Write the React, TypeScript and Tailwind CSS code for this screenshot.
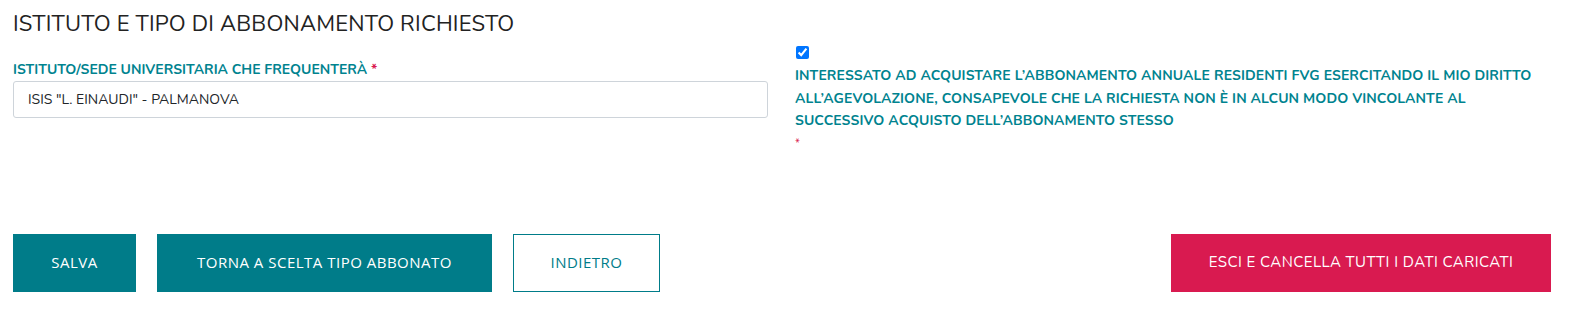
import { useState } from 'react';

const FONT = "font-['Nunito','Lato','Open_Sans',sans-serif]";

function App() {
  const [istituto, setIstituto] = useState('ISIS "L. EINAUDI" - PALMANOVA');
  const [interessato, setInteressato] = useState(true);

  return (
    <div className={`w-full bg-white ${FONT} text-[#212529]`}>
      {/* Section */}
      <div className="px-[13px] pt-[10px]">
        <h2 className="text-[22px] leading-[28px] font-normal text-[#222] tracking-[0.2px]">
          ISTITUTO E TIPO DI ABBONAMENTO RICHIESTO
        </h2>

        <div className="flex gap-[27px] mt-[7px]">
          {/* Left column */}
          <div className="w-[755px] shrink-0 pt-[16px]">
            <label className="block text-[14px] leading-[18px] font-bold text-[#00838f] mb-[2px]">
              ISTITUTO/SEDE UNIVERSITARIA CHE FREQUENTERÀ <span className="text-[#d91a50]">*</span>
            </label>
            <input
              value={istituto}
              onChange={(e) => setIstituto(e.target.value)}
              className="w-full h-[37px] border border-[#ced4da] rounded-[3px] px-[14px] text-[14px] text-[#212529] outline-none"
            />
          </div>

          {/* Right column */}
          <div className="w-[740px] shrink-0">
            <input
              type="checkbox"
              checked={interessato}
              onChange={(e) => setInteressato(e.target.checked)}
              className="block w-[13px] h-[13px] m-0 ml-[1px] mt-[1px]"
            />
            <p className="mt-[6px] text-[14px] leading-[22.5px] font-bold text-[#00838f] tracking-[0.1px]">
              INTERESSATO AD ACQUISTARE L’ABBONAMENTO ANNUALE RESIDENTI FVG ESERCITANDO IL MIO DIRITTO
              ALL’AGEVOLAZIONE, CONSAPEVOLE CHE LA RICHIESTA NON È IN ALCUN MODO VINCOLANTE AL SUCCESSIVO
              ACQUISTO DELL’ABBONAMENTO STESSO
            </p>
            <span className="block mt-[4px] text-[11px] leading-[14px] text-[#d91a50]">*</span>
          </div>
        </div>
      </div>

      {/* Actions */}
      <div className="flex items-center px-[13px] mt-[83px] pb-[27px] pr-[28px]">
        <div className="flex gap-[21px]">
          <button className="w-[123px] h-[58px] bg-[#007c89] text-white text-[15px] tracking-[0.5px] font-['Open_Sans',sans-serif]">
            SALVA
          </button>
          <button className="w-[335px] h-[58px] bg-[#007c89] text-white text-[15px] tracking-[0.5px] font-['Open_Sans',sans-serif]">
            TORNA A SCELTA TIPO ABBONATO
          </button>
          <button className="w-[147px] h-[58px] border border-[#007c89] bg-white text-[#007c89] text-[15px] tracking-[0.5px] font-['Open_Sans',sans-serif]">
            INDIETRO
          </button>
        </div>
        <button className="ml-auto w-[380px] h-[58px] bg-[#d91a50] text-white text-[15px] tracking-[0.45px]">
          ESCI E CANCELLA TUTTI I DATI CARICATI
        </button>
      </div>
    </div>
  );
}

export default App;
